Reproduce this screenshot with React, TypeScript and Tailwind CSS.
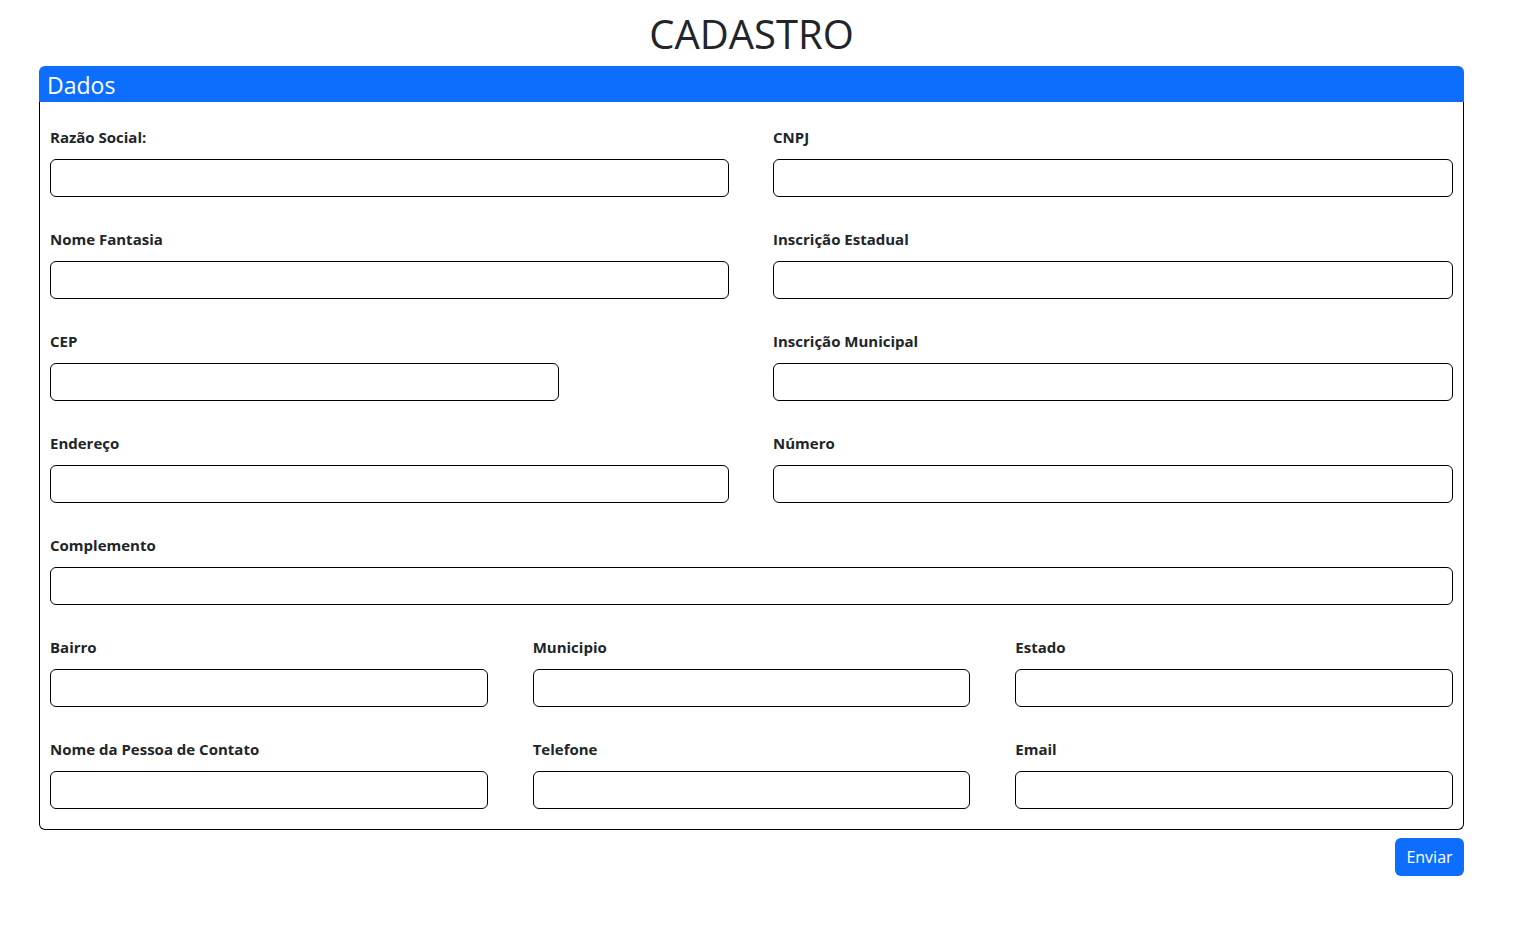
const font = { fontFamily: '"Open Sans", "Noto Sans", Arial, sans-serif' }

type Field = { label: string; span?: 'full' | 'short' }

const twoCol: Field[][] = [
  [{ label: 'Razão Social:' }, { label: 'CNPJ' }],
  [{ label: 'Nome Fantasia' }, { label: 'Inscrição Estadual' }],
  [{ label: 'CEP', span: 'short' }, { label: 'Inscrição Municipal' }],
  [{ label: 'Endereço' }, { label: 'Número' }],
]

const threeCol: Field[][] = [
  [{ label: 'Bairro' }, { label: 'Municipio' }, { label: 'Estado' }],
  [{ label: 'Nome da Pessoa de Contato' }, { label: 'Telefone' }, { label: 'Email' }],
]

function FormField({ label, span }: Field) {
  return (
    <div className="flex flex-col">
      <label className="h-[22px] leading-[22px] text-[15px] font-bold text-[#212529]">{label}</label>
      <input
        type="text"
        className={`mt-[11px] h-[38px] rounded-[6px] border border-black bg-white px-3 outline-none ${
          span === 'short' ? 'w-3/4' : 'w-full'
        }`}
      />
    </div>
  )
}

export default function App() {
  return (
    <div className="min-h-screen bg-white text-[#212529]" style={font}>
      <div className="ml-[39px] w-[1425px]">
        <h1 className="pt-[10px] h-[66px] text-center text-[40px] leading-[48px] font-medium">CADASTRO</h1>

        <div>
          <div className="h-[36px] rounded-t-[6px] bg-[#0d6efd] px-2 text-[23px] leading-[38px] text-white">Dados</div>
          <div className="flex flex-col gap-[31px] rounded-b-[6px] border border-t-0 border-black px-[10px] pt-[24px] pb-[20px]">
            {twoCol.map((row, i) => (
              <div key={i} className="grid grid-cols-[679px_1fr] gap-x-[44px]">
                {row.map(f => (
                  <FormField key={f.label} {...f} />
                ))}
              </div>
            ))}
            <FormField label="Complemento" />
            {threeCol.map((row, i) => (
              <div key={i} className="grid grid-cols-3 gap-x-[45px]">
                {row.map(f => (
                  <FormField key={f.label} {...f} />
                ))}
              </div>
            ))}
          </div>
        </div>

        <div className="mt-[8px] flex justify-end">
          <button className="h-[38px] w-[69px] rounded-[6px] bg-[#0d6efd] text-[16px] text-white">Enviar</button>
        </div>
      </div>
    </div>
  )
}
